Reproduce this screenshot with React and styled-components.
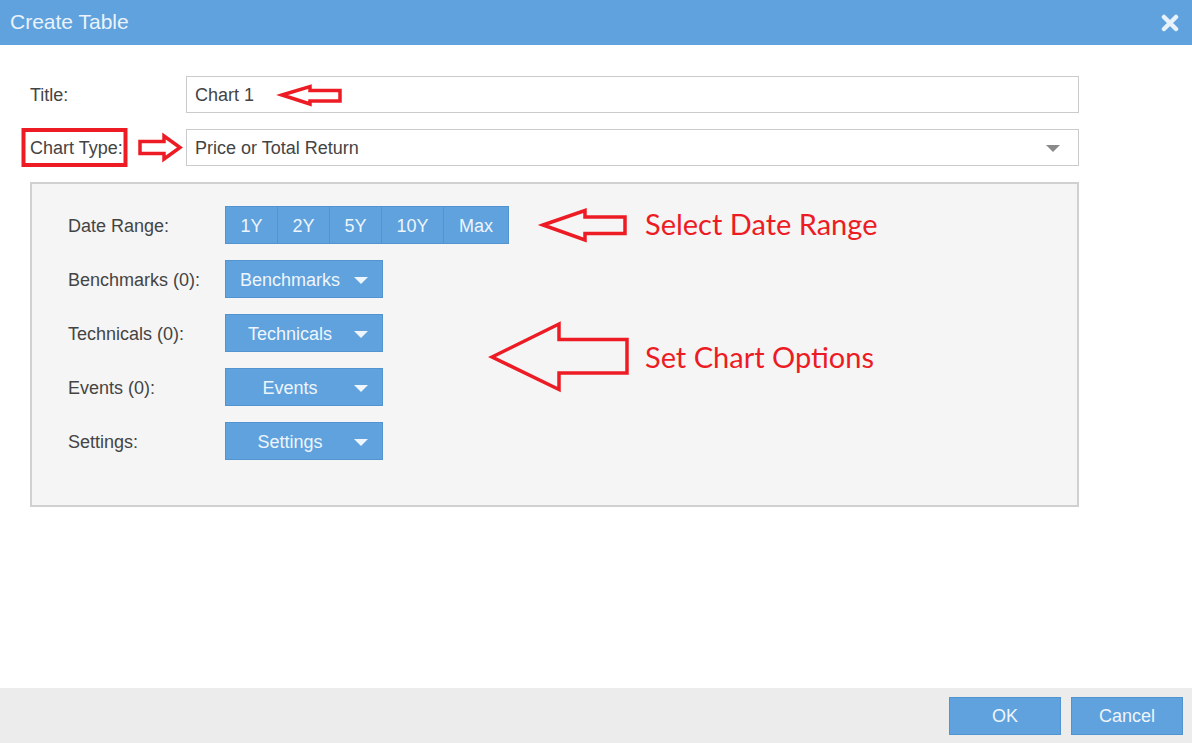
import React from 'react'
import styled, { createGlobalStyle } from 'styled-components'

const GlobalStyle = createGlobalStyle`
  html, body {
    margin: 0;
    padding: 0;
    background: #fff;
    font-family: "Liberation Sans", Arial, sans-serif;
  }
`

const RED = '#ed1c24'
const BLUE = '#5fa2dd'

const Dialog = styled.div`
  position: relative;
  display: flex;
  flex-direction: column;
  width: 1192px;
  height: 743px;
  overflow: hidden;
`

const Header = styled.div`
  height: 45px;
  background: ${BLUE};
  display: flex;
  align-items: center;
  justify-content: space-between;
  padding: 0 13px 0 10px;
  box-sizing: border-box;
`

const HeaderTitle = styled.div`
  color: #eaf2fb;
  font-size: 21px;
  padding-bottom: 2px;
`

const Body = styled.div`
  flex: 1;
  padding: 31px 113px 0 30px;
  display: flex;
  flex-direction: column;
  gap: 16px;
`

const FormRow = styled.div`
  display: flex;
  align-items: center;
`

const FormLabel = styled.div`
  width: 156px;
  font-size: 18px;
  color: #444;
  padding-top: 2px;
`

const TextInput = styled.div`
  flex: 1;
  height: 37px;
  border: 1px solid #cbcbcb;
  box-sizing: border-box;
  display: flex;
  align-items: center;
  padding: 2px 18px 0 8px;
  font-size: 18px;
  color: #444;
  justify-content: space-between;
`

const Panel = styled.div`
  border: 2px solid #d0d0d0;
  background: #f5f5f5;
  padding: 22px 36px 45px;
  display: flex;
  flex-direction: column;
  gap: 16px;
`

const PanelRow = styled.div`
  display: flex;
  align-items: center;
`

const PanelLabel = styled.div`
  width: 157px;
  font-size: 18px;
  color: #444;
  padding-top: 2px;
`

const Segmented = styled.div`
  display: flex;
`

const SegButton = styled.div`
  width: ${({ w }) => w}px;
  height: 38px;
  box-sizing: border-box;
  background: ${BLUE};
  border: 1px solid #5293d2;
  margin-right: -1px;
  color: #eef5fc;
  font-size: 18px;
  display: flex;
  align-items: center;
  justify-content: center;
  padding-top: 2px;
`

const DropButton = styled.div`
  width: 158px;
  height: 38px;
  box-sizing: border-box;
  background: ${BLUE};
  border: 1px solid #5293d2;
  color: #eef5fc;
  font-size: 18px;
  display: flex;
  align-items: center;
  padding: 2px 14px 0 0;
`

const DropText = styled.span`
  flex: 1;
  text-align: center;
`

const Caret = styled.span`
  width: 0;
  height: 0;
  border-left: 7px solid transparent;
  border-right: 7px solid transparent;
  border-top: 7px solid ${({ color }) => color};
`

const Footer = styled.div`
  height: 55px;
  background: #ececec;
  display: flex;
  justify-content: flex-end;
  align-items: center;
  gap: 10px;
  padding-right: 9px;
`

const FooterButton = styled.div`
  width: 112px;
  height: 38px;
  box-sizing: border-box;
  background: ${BLUE};
  border: 1px solid #5293d2;
  color: #eef5fc;
  font-size: 18px;
  display: flex;
  align-items: center;
  justify-content: center;
  padding-top: 2px;
`

/* annotation overlay drawn over the dialog */
const Overlay = styled.svg`
  position: absolute;
  left: 0;
  top: 0;
  pointer-events: none;
`

const Note = styled.span`
  position: absolute;
  left: ${({ x }) => x}px;
  top: ${({ y }) => y}px;
  color: ${RED};
  font-family: "Lato", "Open Sans", sans-serif;
  font-size: 29px;
  white-space: nowrap;
`

const CloseIcon = () => (
  <svg width="18" height="18" viewBox="0 0 18 18">
    <path d="M3 3 L15 15 M15 3 L3 15" stroke="#e9f1fa" strokeWidth="4.5" strokeLinecap="round" />
  </svg>
)

const ranges = [
  { label: '1Y', w: 53 },
  { label: '2Y', w: 53 },
  { label: '5Y', w: 53 },
  { label: '10Y', w: 63 },
  { label: 'Max', w: 66 },
]

const options = [
  { label: 'Benchmarks (0):', button: 'Benchmarks' },
  { label: 'Technicals (0):', button: 'Technicals' },
  { label: 'Events (0):', button: 'Events' },
  { label: 'Settings:', button: 'Settings' },
]

const App = () => {
  return (
    <>
      <GlobalStyle />
      <Dialog>
        <Header>
          <HeaderTitle>Create Table</HeaderTitle>
          <CloseIcon />
        </Header>

        <Body>
          <FormRow>
            <FormLabel>Title:</FormLabel>
            <TextInput>Chart 1</TextInput>
          </FormRow>

          <FormRow>
            <FormLabel>Chart Type:</FormLabel>
            <TextInput>
              Price or Total Return
              <Caret color="#8a8a8a" />
            </TextInput>
          </FormRow>

          <Panel>
            <PanelRow>
              <PanelLabel>Date Range:</PanelLabel>
              <Segmented>
                {ranges.map((r) => (
                  <SegButton key={r.label} w={r.w}>{r.label}</SegButton>
                ))}
              </Segmented>
            </PanelRow>

            {options.map((o) => (
              <PanelRow key={o.label}>
                <PanelLabel>{o.label}</PanelLabel>
                <DropButton>
                  <DropText>{o.button}</DropText>
                  <Caret color="#eef5fc" />
                </DropButton>
              </PanelRow>
            ))}
          </Panel>
        </Body>

        <Footer>
          <FooterButton>OK</FooterButton>
          <FooterButton>Cancel</FooterButton>
        </Footer>

        <Overlay width="1192" height="743">
          <g fill="none" stroke={RED} strokeWidth="3.5" strokeLinejoin="miter">
            <rect x="23.5" y="130" width="102" height="35" strokeWidth="4" />
            <polygon points="282,95 310,86.5 310,90.5 340,90.5 340,101 310,101 310,104" />
            <polygon points="140,141.5 164,141.5 164,136 180,147.5 164,159 164,153.5 140,153.5" />
            <polygon points="543,225 585,210.5 585,217 625,217 625,233.5 585,233.5 585,240" />
            <polygon points="492,357 559,324 559,339.5 627,339.5 627,373 559,373 559,389.5" />
          </g>
        </Overlay>
        <Note x={645} y={206}>Select Date Range</Note>
        <Note x={645} y={339}>Set Chart Options</Note>
      </Dialog>
    </>
  )
}

export default App
